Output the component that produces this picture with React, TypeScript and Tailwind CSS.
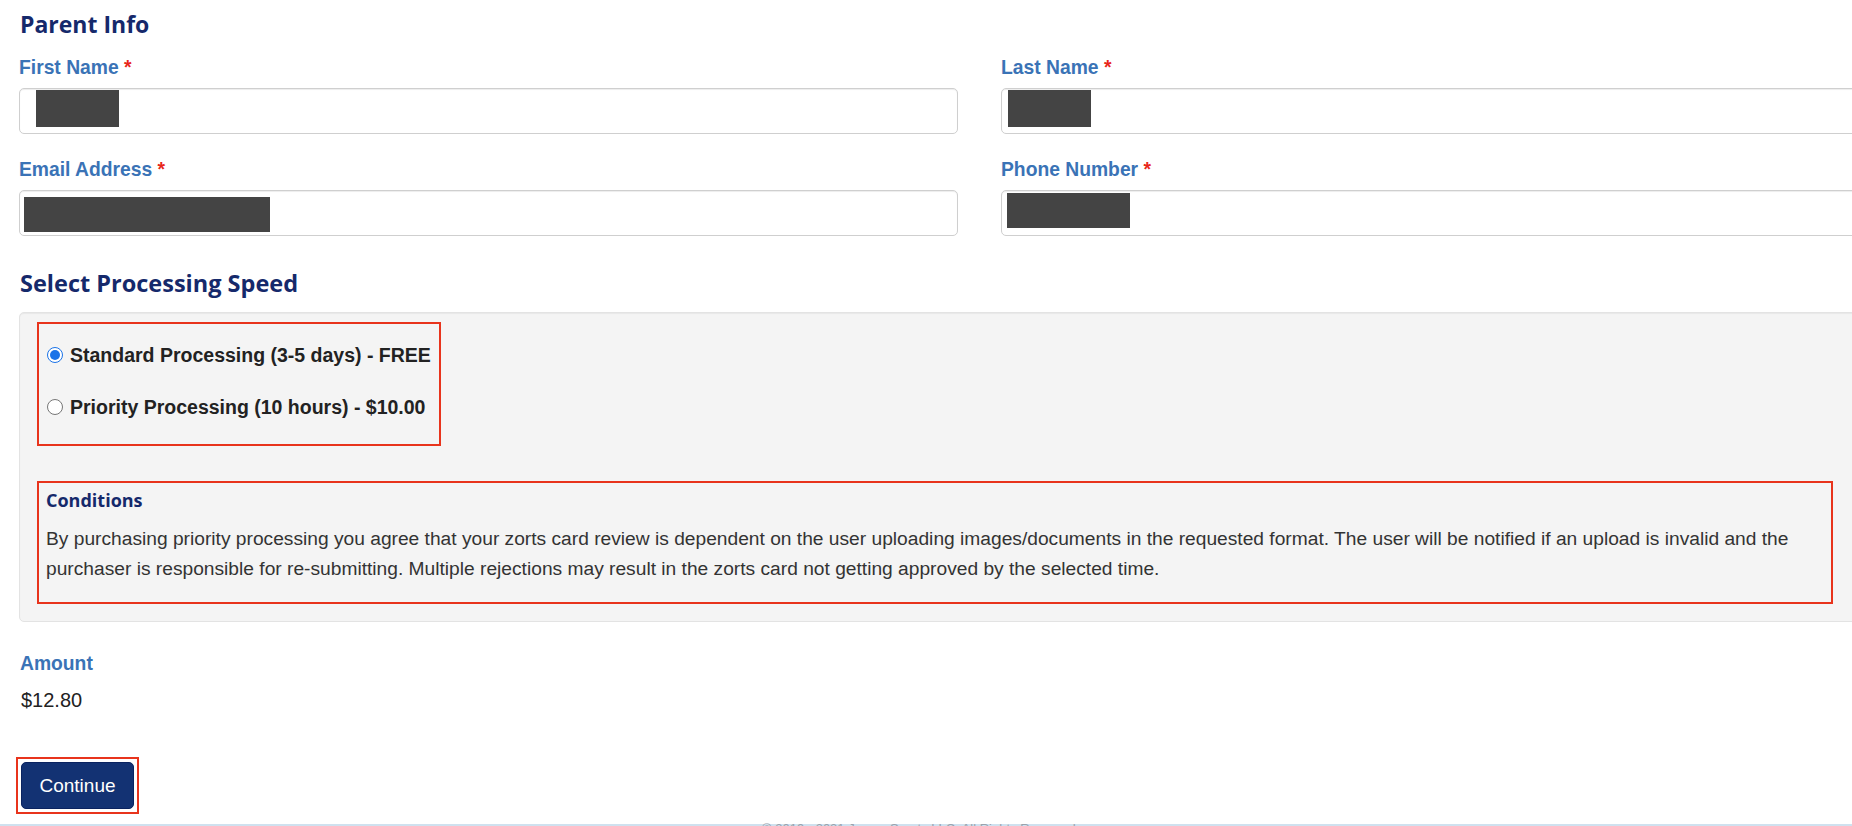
import React from "react";

const headFont = { fontFamily: '"Open Sans", "DejaVu Sans", sans-serif' };

function Label({ children }: { children: React.ReactNode }) {
  return (
    <div className="font-['Liberation_Sans',Arial,sans-serif] text-[19.3px] font-bold leading-[22px] text-[#3a73b6]">
      {children} <span className="text-[#e8261a]">*</span>
    </div>
  );
}

export default function App() {
  return (
    <div className="relative h-[826px] w-[1852px] overflow-hidden bg-white font-['Liberation_Sans',Arial,sans-serif] text-[#333]">
      <div className="pl-[19px] pt-[8px]">
        <h2 style={headFont} className="pl-[1px] text-[23px] font-bold leading-[32px] text-[#15296b]">Parent Info</h2>

        <div className="mt-[17px] grid grid-cols-[939px_939px] gap-x-[43px] gap-y-[25px]">
          <div className="flex flex-col">
            <Label>First Name</Label>
            <div className="mt-[9px] flex h-[46px] w-[939px] items-start rounded-[5px] border border-[#cfcfcf] bg-white pl-[16px] pt-[1px] shadow-[inset_0_1px_1px_rgba(0,0,0,0.075)]">
              <div className="h-[37px] w-[83px] bg-[#444444]" />
            </div>
          </div>
          <div className="flex flex-col">
            <Label>Last Name</Label>
            <div className="mt-[9px] flex h-[46px] w-[939px] items-start rounded-[5px] border border-[#cfcfcf] bg-white pl-[6px] pt-[1px] shadow-[inset_0_1px_1px_rgba(0,0,0,0.075)]">
              <div className="h-[37px] w-[83px] bg-[#444444]" />
            </div>
          </div>
          <div className="flex flex-col">
            <Label>Email Address</Label>
            <div className="mt-[9px] flex h-[46px] w-[939px] items-start rounded-[5px] border border-[#cfcfcf] bg-white pl-[4px] pt-[6px] shadow-[inset_0_1px_1px_rgba(0,0,0,0.075)]">
              <div className="h-[35px] w-[246px] bg-[#444444]" />
            </div>
          </div>
          <div className="flex flex-col">
            <Label>Phone Number</Label>
            <div className="mt-[9px] flex h-[46px] w-[939px] items-start rounded-[5px] border border-[#cfcfcf] bg-white pl-[5px] pt-[2px] shadow-[inset_0_1px_1px_rgba(0,0,0,0.075)]">
              <div className="h-[35px] w-[123px] bg-[#444444]" />
            </div>
          </div>
        </div>

        <h2 style={headFont} className="mt-[31px] pl-[1px] text-[23.5px] font-bold leading-[32px] text-[#15296b]">Select Processing Speed</h2>

        <div className="mt-[13px] w-[1921px] rounded-[5px] border border-[#e3e3e3] bg-[#f4f4f4] pb-[17px] pl-[17px] pt-[9px] shadow-[inset_0_1px_1px_rgba(0,0,0,0.05)]">
          <div className="flex w-[404px] flex-col gap-[30px] border-2 border-[#e8341c] pb-[26px] pl-[8px] pt-[20px]">
            <label className="flex items-center gap-[7px] text-[19.5px] font-bold leading-[22px] text-[#222]">
              <span className="flex h-[16px] w-[16px] items-center justify-center rounded-full border border-[#1a73e8] bg-white">
                <span className="h-[10px] w-[10px] rounded-full bg-[#1a73e8]" />
              </span>
              Standard Processing (3-5 days) - FREE
            </label>
            <label className="flex items-center gap-[7px] text-[19.5px] font-bold leading-[22px] text-[#222]">
              <span className="h-[16px] w-[16px] rounded-full border border-[#767676] bg-white" />
              Priority Processing (10 hours) - $10.00
            </label>
          </div>

          <div className="mt-[35px] w-[1796px] border-2 border-[#e8341c] pb-[19px] pl-[7px] pr-[6px] pt-[5px]">
            <div style={headFont} className="text-[18px] font-bold leading-[24px] text-[#15296b]">Conditions</div>
            <p className="mt-[12px] text-[19.2px] leading-[29.5px] text-[#333]">
              By purchasing priority processing you agree that your zorts card review is dependent on the user uploading images/documents in the requested format. The user will be notified if an upload is invalid and the purchaser is responsible for re-submitting. Multiple rejections may result in the zorts card not getting approved by the selected time.
            </p>
          </div>
        </div>

        <div className="mt-[31px] pl-[1px] text-[19.3px] font-bold leading-[22px] text-[#3a73b6]">Amount</div>
        <div className="mt-[14px] pl-[2px] text-[20px] leading-[22px] text-[#222]">$12.80</div>

        <div className="mt-[46px] inline-flex border-2 border-[#e8341c] p-[3px] -ml-[3px]">
          <button className="h-[47px] w-[113px] rounded-[5px] border border-[#0a2360] bg-[#133273] text-[19px] leading-[22px] text-white">Continue</button>
        </div>
      </div>
      <div className="absolute left-0 top-[824px] h-[2px] w-full bg-[#cfe1ef]" />
      <div className="absolute left-[762px] top-[821px] text-[13px] leading-[16px] text-[#9aa3ad]">© 2019 - 2021 Jersey Sports LLC. All Rights Reserved</div>
    </div>
  );
}
